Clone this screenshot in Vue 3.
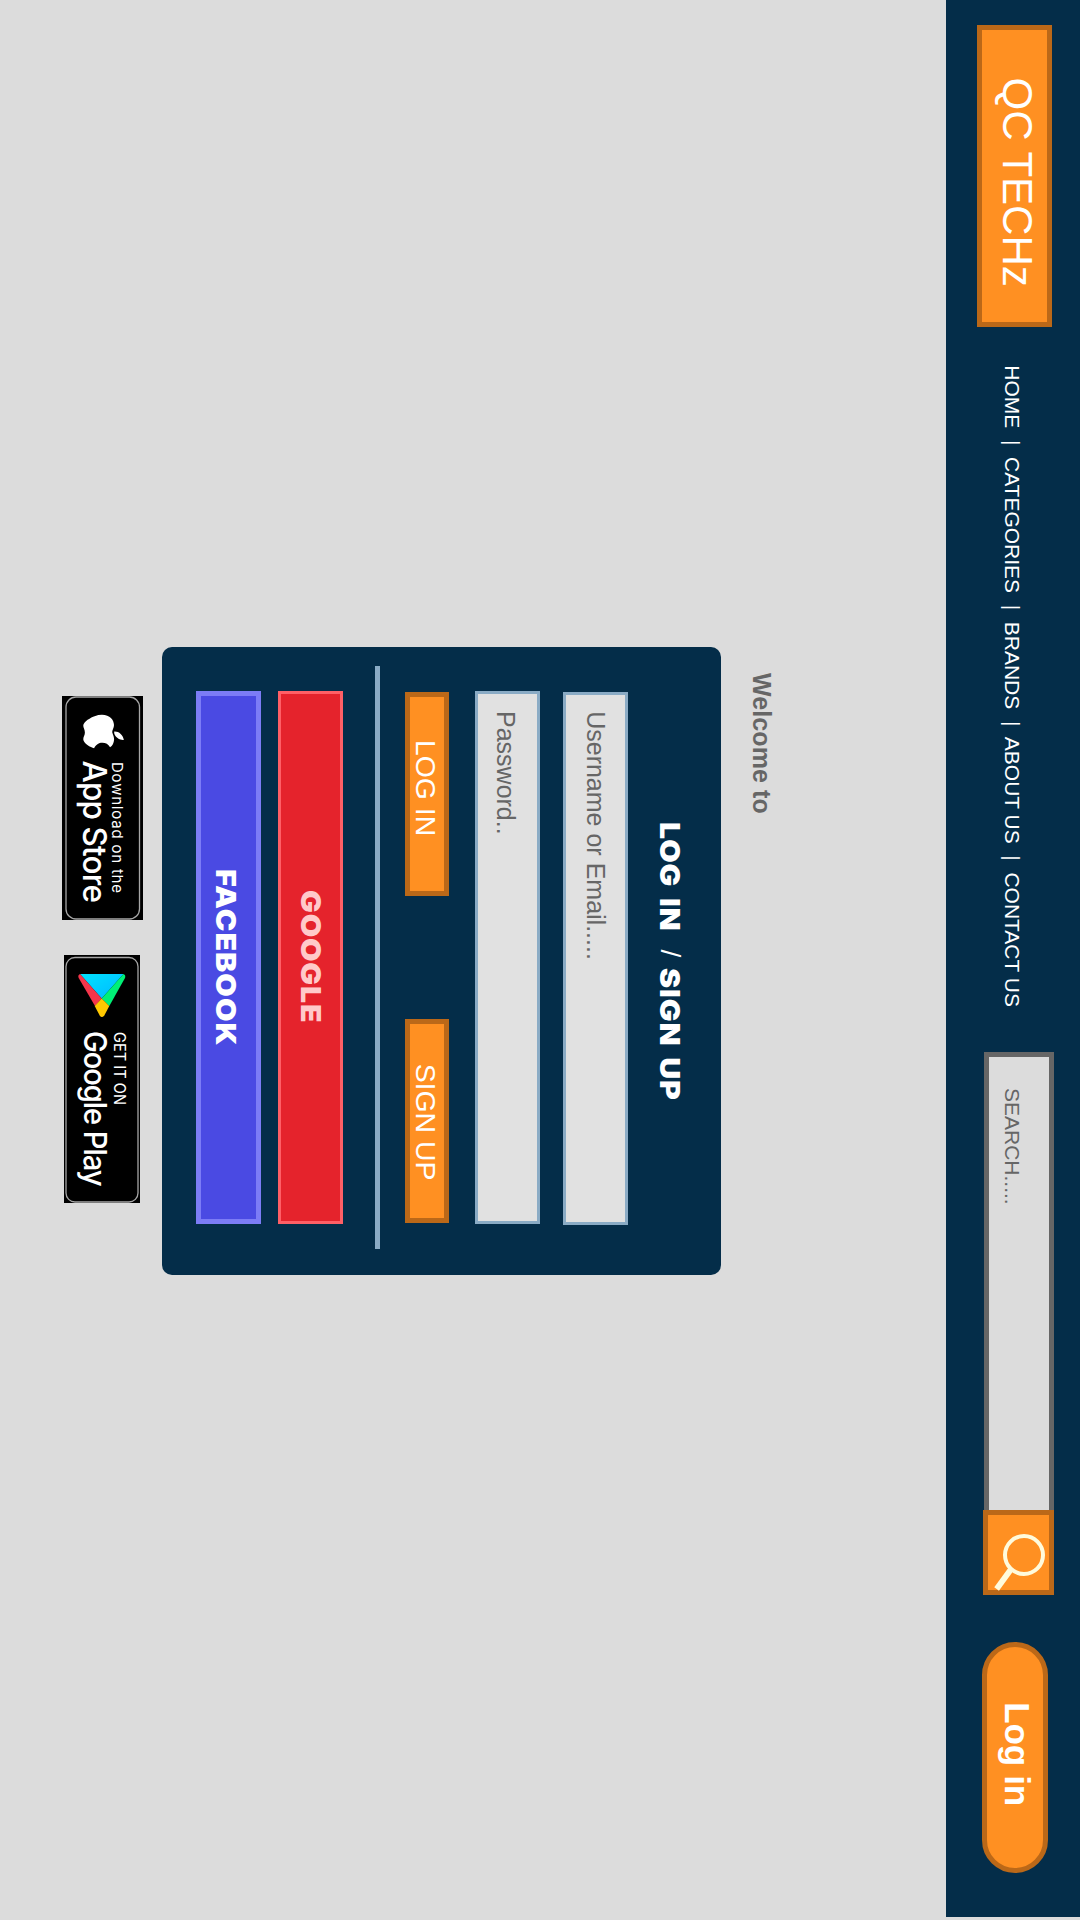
<script setup>
const links = ['HOME', 'CATEGORIES', 'BRANDS', 'ABOUT US', 'CONTACT US']
const navText = links.join('\u00a0 |\u00a0 ')
</script>

<template>
  <div class="stage">
    <div class="screen">
      <header class="bar">
        <div class="logo">QC TECHz</div>
        <nav class="nav">{{ navText }}</nav>
        <div class="search">
          <div class="search-input">SEARCH.....</div>
          <div class="search-button">
            <svg width="75" height="61" viewBox="0 0 75 61">
              <circle cx="40" cy="25" r="19" fill="none" stroke="#fffbdc" stroke-width="4" />
              <path d="M54.2 38L74 52.4" stroke="#fffbdc" stroke-width="5.8" />
            </svg>
          </div>
        </div>
        <div class="login">Log in</div>
      </header>

      <main class="main">
        <h2 class="welcome">Welcome to</h2>

        <section class="card">
          <div class="title">
            <span class="heavy login-word">LOG IN</span>
            <span class="slash">/</span>
            <span class="heavy signup-word">SIGN UP</span>
          </div>
          <div class="field username">Username or Email.....</div>
          <div class="field password">Password..</div>
          <div class="actions">
            <div class="action">LOG IN</div>
            <div class="action signup">SIGN UP</div>
          </div>
          <div class="divider"></div>
          <div class="social google"><span class="heavy">GOOGLE</span></div>
          <div class="social facebook"><span class="heavy">FACEBOOK</span></div>
        </section>

        <div class="badges">
          <svg class="app-store" width="224" height="81" viewBox="0 0 224 81">
            <rect width="224" height="81" fill="#000" />
            <rect x="1" y="3.5" width="222" height="73.5" rx="10" fill="none" stroke="#a6a6a6" stroke-width="1.3" />
            <g transform="translate(18.5 16.3) scale(0.089 0.0905)">
              <path fill="#fff" d="M318.700 268.700c-.2-36.700 16.400-64.400 50-84.800-18.800-26.900-47.200-41.700-84.700-44.600-35.500-2.800-74.300 20.700-88.500 20.700-15 0-49.400-19.700-76.400-19.700C63.300 141.200 4 184.800 4 273.500q0 39.300 14.400 81.200c12.800 36.700 59 126.700 107.200 125.200 25.200-.6 43-17.900 75.800-17.900 31.800 0 48.300 17.900 76.400 17.900 48.600-.7 90.400-82.500 102.600-119.300-65.200-30.700-61.700-90-61.700-91.900zm-56.600-164.200c27.300-32.400 24.800-61.900 24-72.500-24.100 1.400-52 16.400-67.900 34.900-17.500 19.800-27.800 44.300-25.600 71.900 26.100 2 49.900-11.400 69.500-34.300z" />
            </g>
            <text class="label" x="66" y="31" font-size="15" font-weight="400" textLength="131" lengthAdjust="spacing">Download on the</text>
            <text class="label tight" x="64.500" y="60" font-size="32.500" font-weight="500" textLength="141.500" lengthAdjust="spacingAndGlyphs">App Store</text>
          </svg>

          <svg class="google-play" width="248" height="76" viewBox="0 0 248 76">
            <defs>
              <linearGradient id="sky" x1="0" y1="1" x2="1" y2="0">
                <stop offset="0" stop-color="#00e2ff" />
                <stop offset="1" stop-color="#00b8ff" />
              </linearGradient>
            </defs>
            <rect width="248" height="76" fill="#000" />
            <rect x="2.500" y="2" width="244.500" height="72" rx="9" fill="none" stroke="#a6a6a6" stroke-width="1.3" />
            <path fill="url(#sky)" d="M19 16.500L43.500 38.300 19 60Z" />
            <path fill="#00f076" d="M19 16.500Q20 14 23 15L51 30.700 43.500 38.300Z" />
            <path fill="#f5354a" d="M19 60Q20 62.500 23 61.300L51 45 43.500 38.300Z" />
            <path fill="#ffc800" d="M43.500 38.300L51 30.700 60.500 35.700Q63.500 38.300 60.500 40.300L51 45.300Z" />
            <text class="label" x="77" y="25.700" font-size="15.800" textLength="73" lengthAdjust="spacingAndGlyphs">GET IT ON</text>
            <text class="label tighter" x="76" y="56" font-size="31" font-weight="550" textLength="154.500" lengthAdjust="spacingAndGlyphs">Google Play</text>
          </svg>
        </div>
      </main>
    </div>
  </div>
</template>

<style>
body {
  background: #dcdcdc;
}
</style>

<style scoped>
.stage {
  width: 1080px;
  height: 1920px;
  overflow: hidden;
}

/* The landscape page is turned a quarter clockwise onto the portrait display. */
.screen {
  width: 1920px;
  height: 1080px;
  transform-origin: 0 0;
  transform: translateX(1080px) rotate(90deg);
  background: #dcdcdc;
  font-family: "Liberation Sans", Arial, sans-serif;
  white-space: nowrap;
}

.screen * {
  box-sizing: border-box;
}

.bar {
  display: flex;
  align-items: flex-start;
  width: 1917px;
  height: 134px;
  background: #042d49;
  color: #fff;
}

.logo {
  width: 302px;
  height: 75px;
  margin: 28px 0 0 25px;
  padding-left: 47.500px;
  border: 5px solid #bb6818;
  background: #ff9022;
  font-size: 42px;
  line-height: 59px;
}

.nav {
  width: 686px;
  margin: 60px 0 0 38.300px;
  font-size: 21px;
  line-height: 16px;
  letter-spacing: -0.010px;
}

.search {
  display: flex;
  margin: 26px 0 0 0.700px;
}

.search-input {
  width: 458px;
  height: 70px;
  padding-left: 31px;
  border: 5px solid #666;
  border-right: 0;
  background: #dcdcdc;
  color: #666;
  font-size: 21px;
  line-height: 73.500px;
}

.search-button {
  width: 85px;
  height: 71px;
  border: 5px solid #bb6818;
  background: #ff9022;
}

.search-button svg {
  display: block;
  overflow: visible;
}

.login {
  width: 231px;
  height: 66px;
  margin: 32px 0 0 47px;
  padding-left: 55.300px;
  border: 5px solid #bb6818;
  border-radius: 33px;
  background: #ff9022;
  font-size: 35px;
  font-weight: 700;
  line-height: 51.700px;
  letter-spacing: -0.200px;
}

.main {
  display: flex;
  flex-direction: column;
  align-items: flex-start;
}

.welcome {
  margin: 174px 0 0 673px;
  height: 51px;
  color: #666;
  font-size: 25px;
  font-weight: 700;
  line-height: 20.700px;
  letter-spacing: 0.100px;
}

.card {
  display: flex;
  flex-direction: column;
  width: 628px;
  height: 559px;
  margin-left: 647px;
  border-radius: 10px;
  background: #042d49;
  color: #fff;
}

.heavy {
  display: inline-block;
  transform: scaleX(1.1);
  transform-origin: 0 0;
  font-family: Inter, sans-serif;
  font-size: 27.500px;
  font-weight: 900;
  letter-spacing: 0.800px;
  word-spacing: 3.500px;
}

.title {
  display: flex;
  height: 93px;
  padding: 41px 0 0 174.500px;
  line-height: 20px;
}

.login-word {
  width: 128px;
}

.slash {
  width: 18.400px;
  font-size: 28px;
  line-height: 20.600px;
}

.field {
  width: 533px;
  height: 65px;
  margin-left: 44px;
  padding-left: 17px;
  border: 3px solid #8aabc5;
  background: #e1e1e1;
  color: #666;
  font-size: 25px;
}

.username {
  margin-left: 45px;
  padding-left: 16.200px;
  line-height: 58.700px;
}

.password {
  margin-top: 23px;
  line-height: 62.700px;
}

.actions {
  display: flex;
  gap: 123px;
  margin: 26px 0 0 45px;
}

.action {
  width: 204px;
  height: 44px;
  padding-left: 43px;
  border: 5px solid #bb6818;
  background: #ff9022;
  font-size: 28.400px;
  line-height: 36.300px;
}

.signup {
  padding-left: 39.700px;
}

.divider {
  width: 583px;
  height: 5px;
  margin: 25px 0 32px 19px;
  flex: none;
  background: #8aabc5;
}

.social {
  width: 533px;
  height: 65px;
  margin-left: 44px;
}

.google {
  padding-left: 196px;
  border: 3px solid #ff5f66;
  background: #e5232c;
  color: #ffcaca;
  line-height: 58px;
}

.facebook {
  margin-top: 17px;
  padding-left: 172.500px;
  border: 5px solid #7c7cf6;
  background: #4a4ae3;
  line-height: 60px;
}

.facebook .heavy {
  letter-spacing: 1px;
}

.badges {
  display: flex;
  gap: 35px;
  margin: 19px 0 0 696px;
}

.google-play {
  margin-top: 3px;
}

.label {
  fill: #fff;
  font-family: Inter, sans-serif;
}

.tight {
  letter-spacing: -0.900px;
}

.tighter {
  letter-spacing: -1.200px;
}
</style>
